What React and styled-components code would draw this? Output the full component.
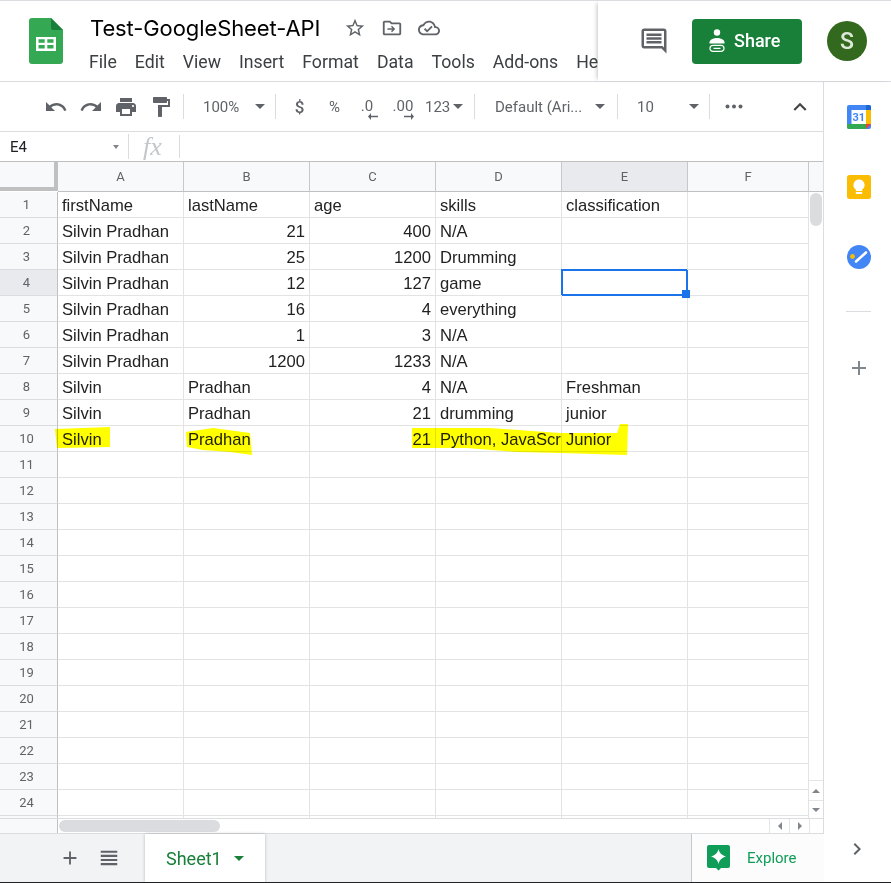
import React from 'react'
import styled, { createGlobalStyle } from 'styled-components'

const rows = [
  ['firstName', 'lastName', 'age', 'skills', 'classification'],
  ['Silvin Pradhan', 21, 400, 'N/A', ''],
  ['Silvin Pradhan', 25, 1200, 'Drumming', ''],
  ['Silvin Pradhan', 12, 127, 'game', ''],
  ['Silvin Pradhan', 16, 4, 'everything', ''],
  ['Silvin Pradhan', 1, 3, 'N/A', ''],
  ['Silvin Pradhan', 1200, 1233, 'N/A', ''],
  ['Silvin', 'Pradhan', 4, 'N/A', 'Freshman'],
  ['Silvin', 'Pradhan', 21, 'drumming', 'junior'],
  ['Silvin', 'Pradhan', 21, 'Python, JavaScript', 'Junior'],
]
const columns = ['A', 'B', 'C', 'D', 'E', 'F']
const menus = ['File', 'Edit', 'View', 'Insert', 'Format', 'Data', 'Tools', 'Add-ons', 'Help']

function Icon({ d, size = 24, color = '#5f6368', box = '0 0 24 24' }) {
  return (
    <svg width={size} height={size} viewBox={box} fill={color}>
      <path d={d} />
    </svg>
  )
}

const paths = {
  undo: 'M12.5 8c-2.65 0-5.05.99-6.9 2.6L2 7v9h9l-3.62-3.62c1.39-1.16 3.16-1.88 5.12-1.88 3.54 0 6.55 2.31 7.6 5.5l2.37-.78C21.08 11.03 17.15 8 12.5 8z',
  redo: 'M18.4 10.6C16.55 8.99 14.15 8 11.5 8c-4.65 0-8.58 3.03-9.96 7.22L3.9 16c1.05-3.19 4.05-5.5 7.6-5.5 1.95 0 3.73.72 5.12 1.88L13 16h9V7l-3.6 3.6z',
  print: 'M19 8H5c-1.66 0-3 1.34-3 3v6h4v4h12v-4h4v-6c0-1.66-1.34-3-3-3zm-3 11H8v-5h8v5zm3-7c-.55 0-1-.45-1-1s.45-1 1-1 1 .45 1 1-.45 1-1 1zm-1-9H6v4h12V3z',
  paint: 'M18 4V3c0-.55-.45-1-1-1H5c-.55 0-1 .45-1 1v4c0 .55.45 1 1 1h12c.55 0 1-.45 1-1V6h1v4H9v11c0 .55.45 1 1 1h2c.55 0 1-.45 1-1v-9h8V4h-3z',
  star: 'M22 9.24l-7.19-.62L12 2 9.19 8.63 2 9.24l5.46 4.73L5.82 21 12 17.27 18.18 21l-1.63-7.03L22 9.24zM12 15.4l-3.76 2.27 1-4.28-3.32-2.88 4.38-.38L12 6.1l1.71 4.04 4.38.38-3.32 2.88 1 4.28L12 15.4z',
  folder: 'M20 6h-8l-2-2H4c-1.1 0-2 .9-2 2v12c0 1.1.9 2 2 2h16c1.1 0 2-.9 2-2V8c0-1.1-.9-2-2-2zm0 12H4V6h5.17l2 2H20v10zM12 9.5l-1.1 1.1 1.6 1.6H7v1.6h5.5l-1.6 1.6 1.1 1.1 3.5-3.5z',
  cloud: 'M19.35 10.04C18.67 6.59 15.64 4 12 4 9.11 4 6.6 5.64 5.35 8.04 2.34 8.36 0 10.91 0 14c0 3.31 2.69 6 6 6h13c2.76 0 5-2.24 5-5 0-2.64-2.05-4.78-4.65-4.96zM19 18H6c-2.21 0-4-1.79-4-4 0-2.05 1.53-3.76 3.56-3.97l1.07-.11.5-.95C8.08 7.14 9.94 6 12 6c2.62 0 4.88 1.86 5.39 4.43l.3 1.5 1.53.11c1.56.1 2.78 1.41 2.78 2.96 0 1.65-1.35 3-3 3zm-9-3.82l-2.09-2.09L6.5 13.5 10 17l6.01-6.01-1.41-1.41z',
  comment: 'M21.99 4c0-1.1-.89-2-1.99-2H4c-1.1 0-2 .9-2 2v12c0 1.1.9 2 2 2h14l4 4-.01-18zM20 4v13.17L18.83 16H4V4h16zM6 12h12v2H6zm0-3h12v2H6zm0-3h12v2H6z',
  chevUp: 'M12 8l-6 6 1.41 1.41L12 10.83l4.59 4.58L18 14z',
  chevRight: 'M10 6L8.59 7.41 13.17 12l-4.58 4.59L10 18l6-6z',
  plus: 'M19 13h-6v6h-2v-6H5v-2h6V5h2v6h6v2z',
  list: 'M3 4h18v2.4H3zm0 4.5h18v2.4H3zm0 4.5h18v2.4H3zm0 4.5h18v2.4H3z',
}

function SheetsLogo() {
  return (
    <svg width="34" height="46" viewBox="0 0 34 46">
      <path d="M3 0h19l12 12v31a3 3 0 0 1-3 3H3a3 3 0 0 1-3-3V3a3 3 0 0 1 3-3z" fill="#34a853" />
      <path d="M22 0l12 12H24a2 2 0 0 1-2-2z" fill="#188038" />
      <path d="M7 19h20v14H7zm2.5 2.2v3.6h6.2v-3.6zm8.8 0v3.6h6.2v-3.6zM9.5 27v3.6h6.2V27zm8.8 0v3.6h6.2V27z" fill="#fff" fillRule="evenodd" />
    </svg>
  )
}

function ShareIcon() {
  return (
    <svg width="18" height="24" viewBox="0 0 18 24" fill="#fff">
      <circle cx="9" cy="4.5" r="3.2" />
      <path d="M1.5 14.5c0-3 4-4.6 7.5-4.6s7.5 1.6 7.5 4.6v1H1.5z" />
      <path d="M5 17.4h8a3 3 0 0 1 0 6H5a3 3 0 0 1 0-6z" fill="none" stroke="#fff" strokeWidth="1.2" />
      <path d="M5.5 20.4h7" stroke="#fff" strokeWidth="1.3" />
    </svg>
  )
}

function CalendarIcon() {
  return (
    <svg width="24" height="24" viewBox="0 0 24 24">
      <rect width="24" height="24" rx="2" fill="#4285f4" />
      <path d="M19 0h3a2 2 0 0 1 2 2v3h-5z" fill="#1967d2" />
      <path d="M19 5h5v14h-5z" fill="#fbbc04" />
      <path d="M0 19h19v5H2a2 2 0 0 1-2-2z" fill="#34a853" />
      <path d="M19 19h5l-5 5z" fill="#ea4335" />
      <rect x="4.5" y="5" width="14.5" height="14" fill="#fff" />
      <text x="11.8" y="16" fontSize="11" fontWeight="700" textAnchor="middle" fill="#4285f4" fontFamily="Roboto, sans-serif">31</text>
    </svg>
  )
}

function KeepIcon() {
  return (
    <svg width="24" height="24" viewBox="0 0 24 24">
      <rect width="24" height="24" rx="2.5" fill="#fbbc04" />
      <path d="M12 4.5a5.5 5.5 0 0 1 3.2 10V16H8.8v-1.5A5.5 5.5 0 0 1 12 4.5z" fill="#fff" />
      <rect x="8.8" y="17" width="6.4" height="2" fill="#fff" />
    </svg>
  )
}

function TasksIcon() {
  return (
    <svg width="24" height="24" viewBox="0 0 24 24">
      <circle cx="12" cy="12" r="12" fill="#4285f4" />
      <path d="M9 16.5L19 7.5" stroke="#fff" strokeWidth="2.6" strokeLinecap="round" />
      <circle cx="5.5" cy="11.5" r="2.4" fill="#fbbc04" />
    </svg>
  )
}

function ExploreIcon() {
  return (
    <svg width="23" height="26" viewBox="0 0 23 26">
      <path d="M2 0h19a2 2 0 0 1 2 2v19a2 2 0 0 1-2 2h-7l-2.5 2.5L9 23H2a2 2 0 0 1-2-2V2a2 2 0 0 1 2-2z" fill="#0f9d58" />
      <path d="M11.5 4c1 4 3 6 7.500 7.500-4.500 1.500-6.500 3.500-7.500 7.500-1-4-3-6-7.500-7.500 4.500-1.500 6.500-3.500 7.500-7.500z" fill="#fff" />
    </svg>
  )
}

function DecimalArrow({ right }) {
  return (
    <svg width="10" height="7" viewBox="0 0 10 7" fill="#5f6368">
      <path d={right ? 'M0 2.8h7V0l3 3.5L7 7V4.2H0z' : 'M10 2.8H3V0L0 3.5 3 7V4.2h7z'} />
    </svg>
  )
}

function MoreIcon() {
  return (
    <svg width="18" height="5" viewBox="0 0 18 5" fill="#5f6368">
      <circle cx="2.5" cy="2.5" r="2" />
      <circle cx="9" cy="2.5" r="2" />
      <circle cx="15.5" cy="2.5" r="2" />
    </svg>
  )
}

export default function App() {
  return (
    <Page>
      <GlobalStyle />
      <Header>
        <HeaderLeft>
          <LogoSlot><SheetsLogo /></LogoSlot>
          <TitleBlock>
            <TitleRow>
              <Title>Test-GoogleSheet-API</Title>
              <TitleIcons>
                <Icon d={paths.star} size={22} />
                <Icon d={paths.folder} size={22} />
                <Icon d={paths.cloud} size={22} />
              </TitleIcons>
            </TitleRow>
            <MenuBar>
              {menus.map(m => <MenuItem key={m}>{m}</MenuItem>)}
            </MenuBar>
          </TitleBlock>
        </HeaderLeft>
        <HeaderRight>
          <CommentSlot><Icon d={paths.comment} size={30} /></CommentSlot>
          <ShareButton><ShareIcon />Share</ShareButton>
          <Avatar>S</Avatar>
        </HeaderRight>
      </Header>

      <Body>
        <Main>
          <Upper>
            <Toolbar>
              <ToolButton $w={35}><Icon d={paths.undo} /></ToolButton>
              <ToolButton $w={35}><Icon d={paths.redo} /></ToolButton>
              <ToolButton $w={35}><Icon d={paths.print} /></ToolButton>
              <ToolButton $w={35}><Icon d={paths.paint} /></ToolButton>
              <ToolDivider $ml={5} />
              <ToolSelect $w={91} $left={19} $right={10}><span>100%</span><Caret /></ToolSelect>
              <ToolDivider $mr={6} />
              <DollarButton $w={35}>$</DollarButton>
              <ToolButton $w={35}>%</ToolButton>
              <DecimalButton $w={30}>.0<DecimalArrow /></DecimalButton>
              <DecimalButton $w={42}>.00<DecimalArrow right /></DecimalButton>
              <ToolSelect $w={44} $left={1} $right={5}><span>123</span><Caret /></ToolSelect>
              <ToolDivider $ml={6} />
              <ToolSelect $w={142} $left={20} $right={12}><span>Default (Ari...</span><Caret /></ToolSelect>
              <ToolDivider />
              <ToolSelect $w={91} $left={19} $right={10}><span>10</span><Caret /></ToolSelect>
              <ToolDivider $mr={6} />
              <ToolButton $w={35}><MoreIcon /></ToolButton>
              <Collapse><Icon d={paths.chevUp} size={26} color="#444" /></Collapse>
            </Toolbar>

            <FormulaBar>
              <NameBox>E4<SmallCaret /></NameBox>
              <FxBox>fx</FxBox>
              <FormulaInput />
            </FormulaBar>

            <SheetRow>
              <GridArea>
                <Grid>
                  <Corner />
                  {columns.map(c => <ColHead key={c} $selected={c === 'E'}>{c}</ColHead>)}
                  {Array.from({ length: 25 }, (_, r) => (
                    <React.Fragment key={r}>
                      <RowHead $selected={r === 3}>{r + 1}</RowHead>
                      {columns.map((c, i) => {
                        const value = rows[r] ? rows[r][i] : undefined
                        const active = r === 3 && c === 'E'
                        return (
                          <Cell key={c} $num={typeof value === 'number'} $active={active}>
                            {value}
                            {active && <FillHandle />}
                          </Cell>
                        )
                      })}
                    </React.Fragment>
                  ))}
                </Grid>
                <Marker viewBox="0 162 809 656" width="809" height="656">
                  <path d="M55 429 L110 427 L110 447 L57 448 Z" />
                  <path d="M186 432 L213 428 L250 433 L252 455 L230 452 L203 450 L187 447 Z" />
                  <path d="M412 428 L490 428 L560 433 L617 433 L620 424 L628 424 L627 455 L560 453 L517 452 L467 448 L412 448 Z" />
                </Marker>
              </GridArea>
              <VScroll>
                <VScrollHead />
                <VTrack><VThumb /></VTrack>
                <ArrowBox $h={20}><TinyUp /></ArrowBox>
                <ArrowBox $h={18}><TinyDown /></ArrowBox>
              </VScroll>
            </SheetRow>

            <HScroll>
              <HScrollLead />
              <HTrack><HThumb /></HTrack>
              <HArrow><TinyLeft /></HArrow>
              <HArrow><TinyRight /></HArrow>
              <HCorner />
            </HScroll>
          </Upper>

          <TabBar>
            <TabTools>
              <Icon d={paths.plus} size={22} />
              <Icon d={paths.list} size={22} />
            </TabTools>
            <SheetTab>Sheet1<GreenCaret /></SheetTab>
            <ExploreBox>
              <ExploreIcon />
              <ExploreLabel>Explore</ExploreLabel>
            </ExploreBox>
          </TabBar>
        </Main>

        <SidePanel>
          <SideApps>
            <CalendarIcon />
            <KeepIcon />
            <TasksIcon />
            <SideRule />
            <Icon d={paths.plus} size={24} color="#80868b" />
          </SideApps>
          <SideChevron><Icon d={paths.chevRight} size={24} /></SideChevron>
        </SidePanel>
      </Body>
    </Page>
  )
}

//#region styles
const GlobalStyle = createGlobalStyle`
  html, body { margin: 0; padding: 0; background: #fff; }
  * { box-sizing: border-box; }
`
const Page = styled.div`
  width: 891px;
  height: 883px;
  display: flex;
  flex-direction: column;
  overflow: hidden;
  border-top: 1px solid #dadce0;
  border-bottom: 1px solid #202124;
  font-family: Roboto, sans-serif;
`
const Header = styled.header`
  height: 81px;
  flex: none;
  display: flex;
  border-bottom: 1px solid #dadce0;
`
const HeaderLeft = styled.div`
  width: 598px;
  flex: none;
  display: flex;
  overflow: hidden;
`
const LogoSlot = styled.div`
  width: 89px;
  flex: none;
  padding: 17px 0 0 29px;
`
const TitleBlock = styled.div`
  display: flex;
  flex-direction: column;
  white-space: nowrap;
`
const TitleRow = styled.div`
  height: 44px;
  display: flex;
  align-items: center;
  padding-top: 9px;
  padding-left: 1px;
`
const Title = styled.div`
  font-family: Inter, sans-serif;
  font-size: 22px;
  color: #000;
  letter-spacing: -0.1px;
`
const TitleIcons = styled.div`
  display: flex;
  gap: 15px;
  margin-left: 24px;
`
const MenuBar = styled.nav`
  display: flex;
  gap: 18px;
  margin-top: 5px;
`
const MenuItem = styled.span`
  font-size: 17.7px;
  line-height: 24px;
  color: #3c4043;
`
const HeaderRight = styled.div`
  flex: 1;
  display: flex;
  align-items: center;
  padding-left: 41px;
  background: #fff;
  box-shadow: -3px 0 4px -2px rgba(60, 64, 67, 0.3);
  position: relative;
`
const CommentSlot = styled.div`
  width: 30px;
  display: flex;
`
const ShareButton = styled.div`
  width: 110px;
  height: 45px;
  margin-left: 23px;
  border-radius: 4px;
  background: #188038;
  color: #fff;
  font-size: 18px;
  font-weight: 500;
  display: flex;
  align-items: center;
  gap: 8px;
  padding: 0 0 2px 16px;
`
const Avatar = styled.div`
  width: 40px;
  height: 40px;
  margin-left: 25px;
  border-radius: 50%;
  background: #33691e;
  color: #dfe8d8;
  font-size: 23px;
  font-weight: 500;
  display: flex;
  align-items: center;
  justify-content: center;
`
const Body = styled.div`
  flex: 1;
  display: flex;
  min-height: 0;
`
const Main = styled.div`
  width: 824px;
  flex: none;
  display: flex;
  flex-direction: column;
`
const Upper = styled.div`
  height: 752px;
  flex: none;
  display: flex;
  flex-direction: column;
  border-right: 1px solid #dadce0;
  border-bottom: 1px solid #dadce0;
`
const Toolbar = styled.div`
  height: 50px;
  flex: none;
  display: flex;
  align-items: center;
  padding-left: 38px;
  border-bottom: 1px solid #dadce0;
  color: #5f6368;
  font-size: 15px;
`
const ToolButton = styled.div`
  width: ${p => p.$w}px;
  flex: none;
  display: flex;
  align-items: center;
  justify-content: center;
`
const DollarButton = styled(ToolButton)`
  font-size: 17px;
  font-weight: 500;
`
const DecimalButton = styled(ToolButton)`
  flex-direction: column;
  align-items: center;
  line-height: 13px;
  font-size: 15px;
  svg { margin: 0 0 -7px 12px; }
`
const ToolDivider = styled.div`
  width: 1px;
  height: 25px;
  flex: none;
  background: #dadce0;
  margin-left: ${p => p.$ml || 0}px;
  margin-right: ${p => p.$mr || 0}px;
`
const ToolSelect = styled.div`
  width: ${p => p.$w}px;
  flex: none;
  display: flex;
  align-items: center;
  justify-content: space-between;
  padding: 0 ${p => p.$right}px 0 ${p => p.$left}px;
  white-space: nowrap;
`
const Caret = styled.i`
  width: 0;
  height: 0;
  flex: none;
  border-left: 5px solid transparent;
  border-right: 5px solid transparent;
  border-top: 5px solid #5f6368;
`
const SmallCaret = styled.i`
  width: 0;
  height: 0;
  margin-left: auto;
  border-left: 3.5px solid transparent;
  border-right: 3.5px solid transparent;
  border-top: 4px solid #80868b;
`
const GreenCaret = styled(Caret)`
  border-top-color: #188038;
  margin-left: 12px;
`
const Collapse = styled.div`
  margin-left: auto;
  margin-right: 10px;
  display: flex;
`
const FormulaBar = styled.div`
  height: 30px;
  flex: none;
  display: flex;
  align-items: center;
  border-bottom: 1px solid #c0c0c0;
`
const NameBox = styled.div`
  width: 129px;
  height: 25px;
  display: flex;
  align-items: center;
  padding: 0 9px 0 10px;
  font-size: 15px;
  color: #202124;
  border-right: 1px solid #dadce0;
`
const FxBox = styled.div`
  width: 51px;
  height: 23px;
  padding-left: 14px;
  font: italic 26px/23px "Liberation Serif", serif;
  color: #c4c7ca;
  border-right: 1px solid #dadce0;
`
const FormulaInput = styled.div`
  flex: 1;
`
const SheetRow = styled.div`
  height: 656px;
  flex: none;
  display: flex;
`
const GridArea = styled.div`
  width: 809px;
  flex: none;
  position: relative;
  overflow: hidden;
`
const Grid = styled.div`
  display: grid;
  grid-template-columns: 58px repeat(5, 126px) 121px;
  grid-template-rows: 30px;
  grid-auto-rows: 26px;
`
const Corner = styled.div`
  background: #f8f9fa;
  border-right: 4px solid #c0c0c0;
  border-bottom: 4px solid #c0c0c0;
  margin-bottom: 1px;
`
const ColHead = styled.div`
  background: ${p => (p.$selected ? '#e8eaed' : '#f8f9fa')};
  border-right: 1px solid #c6c8ca;
  border-bottom: 1px solid #c0c0c0;
  color: #5f6368;
  font-size: 13px;
  display: flex;
  align-items: center;
  justify-content: center;
`
const RowHead = styled.div`
  background: ${p => (p.$selected ? '#e8eaed' : '#f8f9fa')};
  border-right: 1px solid #c0c0c0;
  border-bottom: 1px solid #dadce0;
  color: #5f6368;
  font-size: 13px;
  padding-right: 4px;
  display: flex;
  align-items: center;
  justify-content: center;
`
const Cell = styled.div`
  position: relative;
  border-right: 1px solid #e2e3e3;
  border-bottom: 1px solid #e2e3e3;
  padding: 0 4px;
  font-family: "Liberation Sans", Arial, sans-serif;
  font-size: 16.6px;
  line-height: 27px;
  color: #222;
  white-space: nowrap;
  overflow: ${p => (p.$active ? 'visible' : 'hidden')};
  text-align: ${p => (p.$num ? 'right' : 'left')};
  ${p => p.$active && `
    border-color: #1a73e8;
    box-shadow: inset 0 0 0 1px #1a73e8, -1px -1px 0 0 #1a73e8;
    z-index: 2;
  `}
`
const FillHandle = styled.span`
  position: absolute;
  right: -3px;
  bottom: -3px;
  width: 8px;
  height: 8px;
  background: #1a73e8;
`
const Marker = styled.svg`
  position: absolute;
  left: 0;
  top: 0;
  mix-blend-mode: multiply;
  pointer-events: none;
  fill: #ffff00;
  z-index: 3;
`
const VScroll = styled.div`
  flex: 1;
  display: flex;
  flex-direction: column;
`
const VScrollHead = styled.div`
  height: 30px;
  flex: none;
  background: #f8f9fa;
  border-bottom: 1px solid #c0c0c0;
`
const VTrack = styled.div`
  flex: 1;
  padding: 1px 1px 0;
`
const VThumb = styled.div`
  height: 33px;
  border-radius: 6px;
  background: #dadce0;
`
const ArrowBox = styled.div`
  height: ${p => p.$h}px;
  flex: none;
  border-top: 1px solid #e4e5e6;
  display: flex;
  align-items: center;
  justify-content: center;
`
const TinyUp = styled.i`
  border-left: 4px solid transparent;
  border-right: 4px solid transparent;
  border-bottom: 4px solid #80868b;
`
const TinyDown = styled.i`
  border-left: 4px solid transparent;
  border-right: 4px solid transparent;
  border-top: 4px solid #80868b;
`
const TinyLeft = styled.i`
  border-top: 4px solid transparent;
  border-bottom: 4px solid transparent;
  border-right: 4px solid #80868b;
`
const TinyRight = styled.i`
  border-top: 4px solid transparent;
  border-bottom: 4px solid transparent;
  border-left: 4px solid #80868b;
`
const HScroll = styled.div`
  flex: 1;
  display: flex;
  border-top: 1px solid #dadce0;
`
const HScrollLead = styled.div`
  width: 58px;
  flex: none;
  background: #f8f9fa;
  border-right: 1px solid #c0c0c0;
`
const HTrack = styled.div`
  width: 711px;
  flex: none;
  padding: 1px 0 1px 1px;
`
const HThumb = styled.div`
  width: 161px;
  height: 12px;
  border-radius: 6px;
  background: #dadce0;
`
const HArrow = styled.div`
  width: 20px;
  flex: none;
  border-left: 1px solid #e4e5e6;
  display: flex;
  align-items: center;
  justify-content: center;
`
const HCorner = styled.div`
  flex: 1;
  border-left: 1px solid #e4e5e6;
`
const TabBar = styled.div`
  flex: 1;
  display: flex;
  background: #f1f3f4;
`
const TabTools = styled.div`
  width: 145px;
  flex: none;
  display: flex;
  align-items: center;
  gap: 17px;
  padding-left: 59px;
`
const SheetTab = styled.div`
  width: 120px;
  flex: none;
  display: flex;
  align-items: center;
  padding-left: 21px;
  background: #fff;
  color: #188038;
  font-size: 18px;
  box-shadow: 0 0 3px rgba(60, 64, 67, 0.3);
`
const ExploreBox = styled.div`
  margin-left: auto;
  width: 133px;
  flex: none;
  display: flex;
  align-items: center;
  padding-left: 15px;
  gap: 17px;
  background: #fcfcfc;
  border-left: 1px solid #c6c8ca;
`
const ExploreLabel = styled.span`
  font-size: 15px;
  color: #0f9d58;
`
const SidePanel = styled.aside`
  flex: 1;
  display: flex;
  flex-direction: column;
  align-items: center;
  padding: 23px 0 0 2px;
`
const SideApps = styled.div`
  flex: 1;
  display: flex;
  flex-direction: column;
  align-items: center;
  gap: 46px;
`
const SideRule = styled.div`
  width: 25px;
  height: 1px;
  background: #dadce0;
  margin: -4px 0 -2px;
`
const SideChevron = styled.div`
  display: flex;
  margin: 0 4px 21px 0;
`
//#endregion
